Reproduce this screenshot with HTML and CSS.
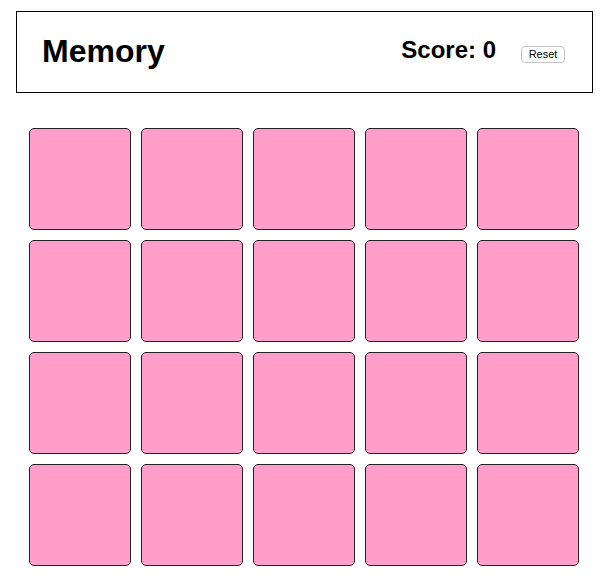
FILE: index.html
```html
<!DOCTYPE html>
<html>
<head>
<meta charset="utf-8">
<title>Memory</title>
<link rel="stylesheet" href="styles.css">
</head>
<body>
<header class="header">
  <h1 class="title">Memory</h1>
  <div class="controls">
    <h2 class="score">Score: 0</h2>
    <button class="reset">Reset</button>
  </div>
</header>
<main class="board">
  <div class="card"></div><div class="card"></div><div class="card"></div><div class="card"></div><div class="card"></div>
  <div class="card"></div><div class="card"></div><div class="card"></div><div class="card"></div><div class="card"></div>
  <div class="card"></div><div class="card"></div><div class="card"></div><div class="card"></div><div class="card"></div>
  <div class="card"></div><div class="card"></div><div class="card"></div><div class="card"></div><div class="card"></div>
</main>
</body>
</html>
```
FILE: styles.css
```css
html, body {
  margin: 0;
  padding: 0;
  background: #fff;
  font-family: "Liberation Sans", Arial, sans-serif;
  color: #000;
}

.header {
  box-sizing: border-box;
  width: 577px;
  height: 82px;
  margin: 11px 0 0 16px;
  border: 1px solid #000;
  display: flex;
  justify-content: space-between;
  align-items: flex-start;
  padding: 0 27px 0 25px;
}

.title {
  margin: 23px 0 0;
  font-size: 32px;
  line-height: 32px;
  font-weight: bold;
}

.controls {
  display: flex;
  align-items: flex-start;
  gap: 25px;
}

.score {
  margin: 26px 0 0;
  font-size: 24px;
  line-height: 24px;
  font-weight: bold;
}

.reset {
  box-sizing: border-box;
  margin-top: 34px;
  width: 44px;
  height: 17px;
  padding: 0;
  border: 1px solid #c4c4c4;
  border-radius: 4px;
  background: #fff;
  font-family: "Liberation Sans", Arial, sans-serif;
  font-size: 11px;
  line-height: 15px;
  color: #000;
}

.board {
  display: grid;
  grid-template-columns: repeat(5, 102px);
  grid-auto-rows: 102px;
  gap: 10px;
  margin: 35px 0 0 29px;
}

.card {
  box-sizing: border-box;
  background: #ff9ec8;
  border: 1px solid #222;
  border-radius: 5px;
}
```
